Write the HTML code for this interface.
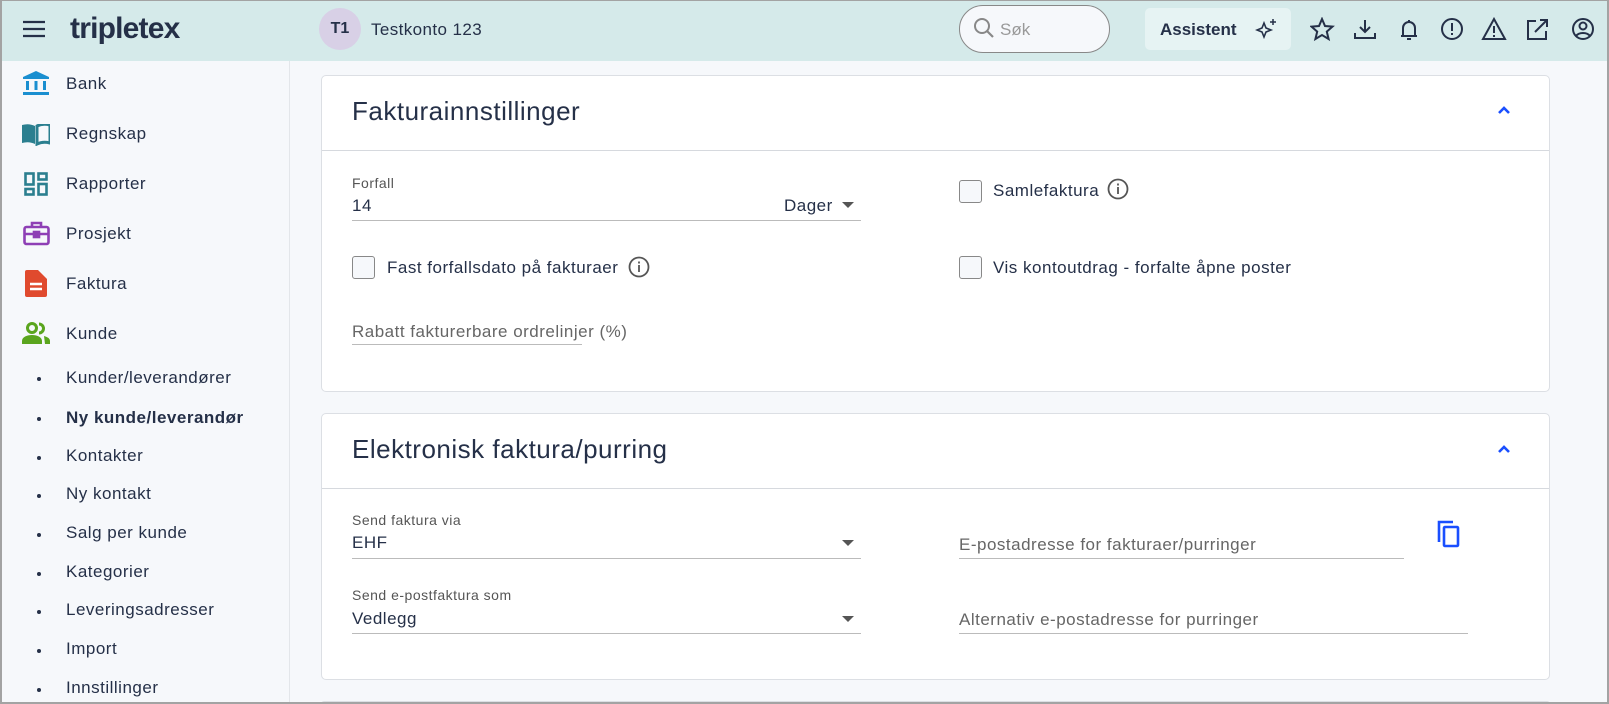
<!DOCTYPE html>
<html><head><meta charset="utf-8"><style>
*{margin:0;padding:0;box-sizing:border-box}
html{width:1609px;height:704px;overflow:hidden}
body{width:1609px;height:704px;overflow:hidden;background:#f6f8fb;font-family:"Liberation Sans",sans-serif;color:#253048;position:relative}
.a{position:absolute;white-space:nowrap}
#frame{position:absolute;left:0;top:0;width:1609px;height:704px;border:2px solid #a3a3a3;border-top-width:1px;z-index:10;pointer-events:none}
#hdr{position:absolute;left:0;top:0;width:1609px;height:61px;background:#d5eaea}
#side{position:absolute;left:0;top:61px;width:290px;height:643px;background:#f6f8fb;border-right:1px solid #e3e6ea}
.card{position:absolute;left:321px;width:1229px;background:#fff;border:1px solid #dcdfe4;border-radius:5px}
.ttl{font-size:26px;letter-spacing:0.5px;color:#253048}
.lbl{font-size:14px;letter-spacing:0.5px;color:#555}
.val{font-size:17px;letter-spacing:0.5px;color:#253048}
.ph{font-size:17px;letter-spacing:0.5px;color:#666}
.ul{position:absolute;height:1px;background:#bbb}
.cb{position:absolute;width:23px;height:23px;border:1px solid #888;border-radius:3px;background:#f6f8fb}
.si,.sub{font-size:17px;letter-spacing:0.5px;color:#253048}
.dot{position:absolute;width:4px;height:4px;border-radius:2px;background:#253048}
</style></head><body>
<div id="hdr"></div>
<svg class="a" style="left:22px;top:19px" width="24" height="20" viewBox="0 0 24 20"><path d="M1 3h22M1 10h22M1 17h22" stroke="#253048" stroke-width="2.2"/></svg>
<div class="a" style="left:70px;top:12px;font-size:30px;font-weight:bold;color:#253048;letter-spacing:-0.8px">tripletex</div>
<div class="a" style="left:319px;top:8px;width:42px;height:42px;border-radius:21px;background:#d8d0e6;font-size:16px;font-weight:bold;text-align:center;line-height:42px">T1</div>
<div class="a" style="left:371px;top:20px;font-size:17px;letter-spacing:0.4px">Testkonto 123</div>
<div class="a" style="left:959px;top:5px;width:151px;height:48px;border:1px solid #888;border-radius:24px;background:#f6f8fb"></div>
<svg class="a" style="left:973px;top:17px" width="22" height="22" viewBox="0 0 22 22"><circle cx="9" cy="9" r="7" stroke="#888" stroke-width="2" fill="none"/><path d="M14 14l6 6" stroke="#888" stroke-width="2.2"/></svg>
<div class="a" style="left:1000px;top:20px;font-size:17px;color:#999">Søk</div>
<div class="a" style="left:1145px;top:8px;width:146px;height:42px;background:#e6f3f3;border-radius:5px"></div>
<div class="a" style="left:1160px;top:20px;font-size:17px;font-weight:bold">Assistent</div>
<svg class="a" style="left:1255px;top:17px" width="24" height="24" viewBox="0 0 24 24"><path d="M9 6l2 5 5 2-5 2-2 5-2-5-5-2 5-2z" stroke="#253048" stroke-width="1.6" fill="none"/><path d="M18 2v6M15 5h6" stroke="#253048" stroke-width="1.5"/></svg>
<svg class="a" style="left:1310px;top:17px" width="300" height="26" viewBox="0 0 300 26" fill="none" stroke="#253048" stroke-width="2">
<path d="M12 2l3 7 7.5.6-5.7 5 1.8 7.4L12 18l-6.6 4 1.8-7.4-5.7-5L9 9z"/>
<path d="M55 3v12M50 10l5 5 5-5M45 16v5h20v-5"/>
<path d="M93 19V11a6 6 0 0 1 12 0v8zM91 19h16M97 22h4M99 3v2"/>
<circle cx="142" cy="12" r="10"/><path d="M142 6v8M142 16v2"/>
<path d="M184 2l11 20H173z M184 9v7M184 18v2"/>
<path d="M226 4h-8v18h18v-8M225 15l12-12M230 3h7v7"/>
<circle cx="273" cy="12" r="10"/><circle cx="273" cy="9" r="3.5"/><path d="M266 19c3-4 11-4 14 0"/>
</svg>

<div id="side"></div>
<svg class="a" style="left:22px;top:71px" width="28" height="26" viewBox="0 0 28 26" fill="#1a8fd0"><path d="M14 0l13 6v2H1V6z"/><rect x="4" y="10" width="3" height="9"/><rect x="12.5" y="10" width="3" height="9"/><rect x="21" y="10" width="3" height="9"/><rect x="1" y="21" width="26" height="3"/></svg>
<div class="a si" style="left:66px;top:74px">Bank</div>
<svg class="a" style="left:22px;top:124px" width="28" height="22" viewBox="0 0 28 22" fill="#2b7f8f"><path d="M0 1q7-2 13 1v18q-6-3-13-1z"/><path d="M15 2q6-3 13-1v18q-7-2-13 1z" fill="none" stroke="#2b7f8f" stroke-width="3"/></svg>
<div class="a si" style="left:66px;top:124px">Regnskap</div>
<svg class="a" style="left:24px;top:172px" width="24" height="24" viewBox="0 0 24 24" fill="none" stroke="#2b7f8f" stroke-width="2.6"><rect x="1.5" y="1.5" width="8" height="11"/><rect x="14.5" y="1.5" width="8" height="6"/><rect x="1.5" y="17" width="8" height="5.5"/><rect x="14.5" y="12" width="8" height="10.5"/></svg>
<div class="a si" style="left:66px;top:174px">Rapporter</div>
<svg class="a" style="left:23px;top:221px" width="27" height="25" viewBox="0 0 27 25" fill="none" stroke="#8e3fb5" stroke-width="2.6"><rect x="1.5" y="6" width="24" height="17" rx="2"/><path d="M9 6V2h9v4M1.5 13h24"/><rect x="11" y="11" width="5" height="5" fill="#8e3fb5"/></svg>
<div class="a si" style="left:66px;top:224px">Prosjekt</div>
<svg class="a" style="left:25px;top:270px" width="22" height="27" viewBox="0 0 22 27" fill="#e04a2e"><path d="M0 2a2 2 0 0 1 2-2h11l9 9v16a2 2 0 0 1-2 2H2a2 2 0 0 1-2-2z"/><path d="M5 14h12M5 19h12" stroke="#fff" stroke-width="2.5"/></svg>
<div class="a si" style="left:66px;top:274px">Faktura</div>
<svg class="a" style="left:22px;top:322px" width="28" height="22" viewBox="0 0 28 22" fill="#5aa51e"><circle cx="10" cy="6" r="4.5" fill="none" stroke="#5aa51e" stroke-width="3"/><path d="M17 2a4.5 4.5 0 0 1 0 9" fill="none" stroke="#5aa51e" stroke-width="3"/><path d="M0 22v-3c0-4 5-6 10-6s10 2 10 6v3zM22 14c3 1 6 2 6 5v3h-5z"/></svg>
<div class="a si" style="left:66px;top:324px">Kunde</div>

<div class="dot" style="left:37px;top:377px"></div><div class="a sub" style="left:66px;top:368px">Kunder/leverandører</div>
<div class="dot" style="left:37px;top:417px"></div><div class="a sub" style="left:66px;top:408px;font-weight:bold">Ny kunde/leverandør</div>
<div class="dot" style="left:37px;top:456px"></div><div class="a sub" style="left:66px;top:446px">Kontakter</div>
<div class="dot" style="left:37px;top:494px"></div><div class="a sub" style="left:66px;top:484px">Ny kontakt</div>
<div class="dot" style="left:37px;top:533px"></div><div class="a sub" style="left:66px;top:523px">Salg per kunde</div>
<div class="dot" style="left:37px;top:572px"></div><div class="a sub" style="left:66px;top:562px">Kategorier</div>
<div class="dot" style="left:37px;top:610px"></div><div class="a sub" style="left:66px;top:600px">Leveringsadresser</div>
<div class="dot" style="left:37px;top:649px"></div><div class="a sub" style="left:66px;top:639px">Import</div>
<div class="dot" style="left:37px;top:688px"></div><div class="a sub" style="left:66px;top:678px">Innstillinger</div>

<div class="card" style="top:75px;height:317px"></div>
<div class="a" style="left:322px;top:150px;width:1227px;height:1px;background:#d6d9de"></div>
<div class="a ttl" style="left:352px;top:96px">Fakturainnstillinger</div>
<svg class="a" style="left:1497px;top:105px" width="14" height="10" viewBox="0 0 14 10"><path d="M2 8l5-5 5 5" stroke="#1a4fff" stroke-width="2.6" fill="none"/></svg>
<div class="a lbl" style="left:352px;top:175px">Forfall</div>
<div class="a val" style="left:352px;top:196px">14</div>
<div class="a val" style="left:784px;top:196px">Dager</div>
<svg class="a" style="left:842px;top:202px" width="12" height="6"><path d="M0 0h12L6 6z" fill="#555"/></svg>
<div class="ul" style="left:352px;top:220px;width:509px"></div>
<div class="cb" style="left:352px;top:256px"></div>
<div class="a val" style="left:387px;top:258px">Fast forfallsdato på fakturaer</div>
<svg class="a" style="left:628px;top:256px" width="22" height="22" viewBox="0 0 22 22" fill="none" stroke="#555" stroke-width="1.8"><circle cx="11" cy="11" r="9.5"/><path d="M11 9v7M11 5.5v2"/></svg>
<div class="ul" style="left:352px;top:344px;width:230px"></div>
<div class="a ph" style="left:352px;top:322px">Rabatt fakturerbare ordrelinjer (%)</div>
<div class="cb" style="left:959px;top:180px"></div>
<div class="a val" style="left:993px;top:181px">Samlefaktura</div>
<div class="a" style="left:1107px;top:178px"><svg width="22" height="22" viewBox="0 0 22 22" fill="none" stroke="#555" stroke-width="1.8"><circle cx="11" cy="11" r="9.5"/><path d="M11 9v7M11 5.5v2"/></svg></div>
<div class="cb" style="left:959px;top:256px"></div>
<div class="a val" style="left:993px;top:258px">Vis kontoutdrag - forfalte åpne poster</div>

<div class="card" style="top:413px;height:267px"></div>
<div class="a" style="left:322px;top:488px;width:1227px;height:1px;background:#d6d9de"></div>
<div class="a ttl" style="left:352px;top:434px">Elektronisk faktura/purring</div>
<svg class="a" style="left:1497px;top:444px" width="14" height="10" viewBox="0 0 14 10"><path d="M2 8l5-5 5 5" stroke="#1a4fff" stroke-width="2.6" fill="none"/></svg>
<div class="a lbl" style="left:352px;top:512px">Send faktura via</div>
<div class="a val" style="left:352px;top:533px">EHF</div>
<svg class="a" style="left:842px;top:540px" width="12" height="6"><path d="M0 0h12L6 6z" fill="#555"/></svg>
<div class="ul" style="left:352px;top:558px;width:509px"></div>
<div class="a lbl" style="left:352px;top:587px">Send e-postfaktura som</div>
<div class="a val" style="left:352px;top:609px">Vedlegg</div>
<svg class="a" style="left:842px;top:616px" width="12" height="6"><path d="M0 0h12L6 6z" fill="#555"/></svg>
<div class="ul" style="left:352px;top:633px;width:509px"></div>
<div class="a ph" style="left:959px;top:535px">E-postadresse for fakturaer/purringer</div>
<div class="ul" style="left:959px;top:558px;width:445px"></div>
<svg class="a" style="left:1437px;top:520px" width="24" height="28" viewBox="0 0 24 28" fill="none" stroke="#1a4fff" stroke-width="2.6"><path d="M2 22V2h14"/><rect x="7" y="7" width="14" height="19" rx="1"/></svg>
<div class="a ph" style="left:959px;top:610px">Alternativ e-postadresse for purringer</div>
<div class="ul" style="left:959px;top:633px;width:509px"></div>

<div class="card" style="top:701px;height:3px;border-bottom:none;border-radius:5px 5px 0 0"></div>
<div id="frame"></div>
</body></html>
